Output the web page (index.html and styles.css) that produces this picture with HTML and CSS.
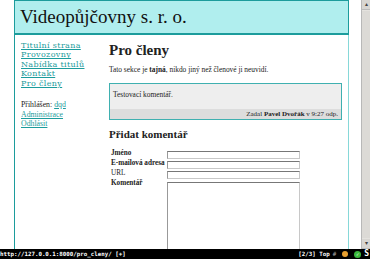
FILE: index.html
```html
<!DOCTYPE html>
<html lang="cs">
<head>
    <meta charset="UTF-8">
    <title>Pro členy</title>
    <link rel="stylesheet" href="styles.css">
</head>
<body>
    <div class="window">
        <div class="viewport">
            <div class="page-area">
                <div class="page">
                    <div class="header">Videopůjčovny s. r. o.</div>
                    <div class="columns">
                        <div class="sidebar">
                            <ul class="menu">
                                <li><a href="#">Titulní strana</a></li>
                                <li><a href="#">Provozovny</a></li>
                                <li><a href="#">Nabídka titulů</a></li>
                                <li><a href="#">Kontakt</a></li>
                                <li><a href="#">Pro členy</a></li>
                            </ul>
                            <div class="login">
                                <div>Přihlášen: <a href="#">dqd</a></div>
                                <div><a href="#">Administrace</a></div>
                                <div><a href="#">Odhlásit</a></div>
                            </div>
                        </div>
                        <div class="main">
                            <h1>Pro členy</h1>
                            <p>Tato sekce je <strong>tajná</strong>, nikdo jiný než členové ji neuvidí.</p>
                            <div class="comment">
                                <div class="comment-text">Testovací komentář.</div>
                                <div class="comment-meta">Zadal <strong>Pavel Dvořák</strong> v 9:27 odp.</div>
                            </div>
                            <h2>Přidat komentář</h2>
                            <form class="comment-form">
                                <label class="req">Jméno</label>
                                <input type="text">
                                <label class="req">E-mailová adresa</label>
                                <input type="text">
                                <label>URL</label>
                                <input type="text">
                                <label class="req">Komentář</label>
                                <textarea></textarea>
                            </form>
                        </div>
                    </div>
                </div>
            </div>
            <div class="scrollbar">
                <div class="sb-btn">&#9652;</div>
                <div class="sb-thumb"></div>
                <div class="sb-btn">&#9662;</div>
            </div>
        </div>
        <div class="statusbar">
            <span>http://127.0.0.1:8000/pro_cleny/ [+]</span>
            <span class="status-right">
                [2/3] Top <span class="st-gray">#</span>
                <span class="st-orange"></span>
                <span class="st-green">&#10003;</span>
                <span class="st-s">S</span>
            </span>
        </div>
    </div>
</body>
</html>
```

FILE: styles.css
```css
body {
    margin: 0;
    background-color: #fff;
    color: #222;
    font-family: "Liberation Serif", serif;
}

.window {
    width: 370px;
    height: 259px;
    display: flex;
    flex-direction: column;
    overflow: hidden;
}

.viewport {
    flex: 1;
    display: flex;
    min-height: 0;
}

.page-area {
    flex: 1;
    overflow: hidden;
}

.page {
    margin-left: 14px;
    width: 335px;
}

.header {
    height: 32px;
    padding-left: 5px;
    background-color: #b0eeee;
    border: 1px solid #1c9c9c;
    border-bottom-width: 2px;
    font-size: 19px;
    line-height: 32px;
    color: #111;
}

.columns {
    display: flex;
    border-left: 1px solid #1c9c9c;
    border-right: 1px solid #86d8d8;
    min-height: 300px;
}

.sidebar {
    width: 88px;
    padding: 6px 0 0 6px;
}

a {
    color: #1c9c9c;
}

.menu {
    list-style: none;
    margin: 0;
    padding: 0;
    font-family: "DejaVu Serif", serif;
    font-size: 8px;
    line-height: 9.4px;
    letter-spacing: 0.35px;
}

.menu li {
    white-space: nowrap;
}

.login {
    margin-top: 12px;
    font-size: 7.8px;
    line-height: 9.7px;
}

.main {
    flex: 1;
    padding: 6px 6px 0 0;
    font-size: 7.4px;
}

h1 {
    margin: 0;
    font-size: 15px;
    line-height: 18px;
}

p {
    margin: 6px 0 0;
    line-height: 9px;
}

.comment {
    margin-top: 9px;
    border: 1px solid #3fb0b0;
    background-color: #eee;
}

.comment-text {
    padding: 6px 2px 10px 3px;
    line-height: 9px;
}

.comment-meta {
    background-color: #ddd;
    text-align: right;
    padding-right: 3px;
    height: 10px;
    line-height: 10px;
    font-size: 7px;
}

h2 {
    margin: 8px 0 0;
    font-size: 11px;
    line-height: 13px;
}

.comment-form {
    margin: 10px 0 0 2px;
    display: grid;
    grid-template-columns: 56px 133px;
    grid-auto-rows: 8px;
    row-gap: 2px;
}

.comment-form label {
    font-size: 7.2px;
    line-height: 5px;
}

.comment-form label.req {
    font-weight: bold;
}

.comment-form input,
.comment-form textarea {
    box-sizing: border-box;
    margin: 0;
    padding: 0;
    width: 133px;
    height: 8px;
    background: #fff;
    border: 1px solid #c8c8c8;
    border-top-color: #777;
    border-left-color: #999;
}

.comment-form textarea {
    height: 80px;
    resize: none;
    margin-top: 1px;
}

.scrollbar {
    width: 8px;
    border-left: 1px solid #b8b8b8;
    background-color: #e4e2de;
    display: flex;
    flex-direction: column;
}

.sb-btn {
    height: 9px;
    font-size: 6px;
    line-height: 9px;
    text-align: center;
    color: #444;
    background-color: #d8d6d2;
    border-bottom: 1px solid #bbb;
}

.sb-thumb {
    flex: 1;
    margin: 1px 0;
    background-color: #dcdad6;
}

.statusbar {
    height: 10px;
    background-color: #000;
    color: #fff;
    font-family: "DejaVu Sans Mono", monospace;
    font-weight: bold;
    font-size: 5.8px;
    line-height: 10px;
    display: flex;
    justify-content: space-between;
}

.status-right {
    display: flex;
    align-items: center;
    gap: 3px;
    padding-right: 1px;
}

.st-gray {
    color: #888;
}

.st-orange {
    width: 6px;
    height: 6px;
    border-radius: 50%;
    background-color: #e8a030;
    margin: 0 3px;
}

.st-green {
    width: 7px;
    height: 7px;
    border-radius: 50%;
    background-color: #3cb83c;
    font-size: 5px;
    line-height: 7px;
    text-align: center;
}

.st-s {
    font-size: 8px;
}
```
